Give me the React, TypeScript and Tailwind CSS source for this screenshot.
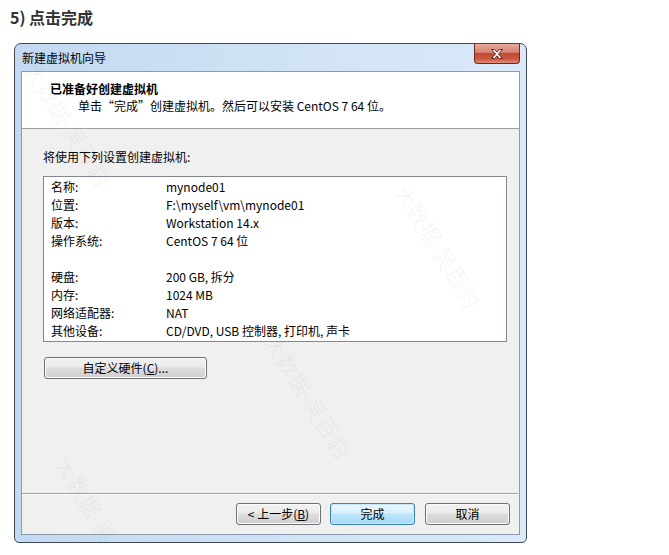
import React from 'react';

const font = "font-['Noto_Sans_CJK_SC','Microsoft_YaHei',sans-serif]";

type Row = { label: string; value: string } | null;

const summary: Row[] = [
  { label: '名称:', value: 'mynode01' },
  { label: '位置:', value: 'F:\\myself\\vm\\mynode01' },
  { label: '版本:', value: 'Workstation 14.x' },
  { label: '操作系统:', value: 'CentOS 7 64 位' },
  null,
  { label: '硬盘:', value: '200 GB, 拆分' },
  { label: '内存:', value: '1024 MB' },
  { label: '网络适配器:', value: 'NAT' },
  { label: '其他设备:', value: 'CD/DVD, USB 控制器, 打印机, 声卡' },
];

// faint diagonal watermark stamps
const marks = [
  { left: 28, top: 58, text: '大数据-吴百豹' },
  { left: 398, top: 180, text: '大数据-吴百豹' },
  { left: 268, top: 330, text: '大数据-吴百豹' },
  { left: 58, top: 452, text: '大数据-吴' },
];

const WinButton: React.FC<{ children: React.ReactNode; primary?: boolean; className?: string }> = ({
  children,
  primary,
  className = '',
}) => (
  <div
    className={`flex items-center justify-center rounded-[3px] border text-[12px] leading-[16px] text-black ${
      primary
        ? 'border-[#3c7fb1] bg-[linear-gradient(#eaf6fd_0%,#d9f0fc_45%,#bee6fd_50%,#a7d9f5_100%)] shadow-[inset_0_0_0_1px_#c8e8fb]'
        : 'border-[#707070] bg-[linear-gradient(#f2f2f2_0%,#ebebeb_45%,#dddddd_50%,#cfcfcf_100%)] shadow-[inset_0_0_0_1px_#fcfcfc]'
    } ${className}`}
  >
    {children}
  </div>
);

const CloseButton: React.FC = () => (
  <div className="absolute right-[6px] top-0 flex h-[20px] w-[46px] items-center justify-center rounded-b-[4px] border border-t-0 border-[#6b2a22] bg-[linear-gradient(#e9a99b_0%,#d7806e_45%,#c4472f_50%,#cb5a43_80%,#e28f79_100%)]">
    <svg width="14" height="12" viewBox="0 0 14 12">
      <path
        d="M1.5 1.5h3l2.5 2.7 2.5-2.7h3l-4 4.5 4 4.5h-3L7 7.8l-2.5 2.7h-3l4-4.5z"
        fill="#ffffff"
        stroke="#5a2a24"
        strokeWidth="1"
        strokeLinejoin="round"
      />
    </svg>
  </div>
);

const App: React.FC = () => {
  return (
    <div className={`relative h-[555px] w-[669px] overflow-hidden bg-white ${font}`}>
      {/* Step heading */}
      <div className="h-[43px] pl-[10px] pt-[5px] text-[16px] font-bold leading-[24px] text-[#333333]">5) 点击完成</div>

      {/* Wizard window */}
      <div className="relative ml-[14px] flex h-[500px] w-[513px] flex-col rounded-t-[7px] rounded-b-[5px] border border-[#3e4a57] bg-[linear-gradient(90deg,#c3d9f1_0%,#d2e4f6_60%,#dbe9f8_100%)]">
        {/* Title bar */}
        <div className="relative flex h-[27px] shrink-0 items-center pl-[7px] text-[12px] leading-[16px] text-black">
          新建虚拟机向导
          <CloseButton />
        </div>

        {/* Client area */}
        <div className="mx-[6px] flex h-[464px] flex-col border border-[#8a9bb0] bg-[#f0f0f0]">
          {/* Header */}
          <div className="h-[57px] shrink-0 border-b border-[#a0a0a0] bg-white pl-[28px] pt-[8px] text-[12px] leading-[17px] text-black">
            <div className="font-bold">已准备好创建虚拟机</div>
            <div className="pl-[28px]">单击“完成”创建虚拟机。然后可以安装 CentOS 7 64 位。</div>
          </div>

          {/* Body */}
          <div className="flex flex-1 flex-col pl-[21px] pt-[20px] text-[12px] leading-[16px] text-black">
            <div>将使用下列设置创建虚拟机:</div>

            <div className="mt-[11px] h-[166px] w-[464px] border border-[#828790] bg-white pl-[7px] pt-[1px]">
              {summary.map((row, i) =>
                row ? (
                  <div key={i} className="flex h-[18px] items-center">
                    <span className="w-[115px] shrink-0">{row.label}</span>
                    <span>{row.value}</span>
                  </div>
                ) : (
                  <div key={i} className="h-[18px]" />
                )
              )}
            </div>

            <WinButton className="ml-[1px] mt-[15px] h-[22px] w-[163px]">
              <span>
                自定义硬件(<span className="underline">C</span>)...
              </span>
            </WinButton>

            <div className="flex-1" />

            {/* Etched separator */}
            <div className="-ml-[21px] mr-[1px] border-t border-b border-t-[#a0a0a0] border-b-white" />

            <div className="flex h-[39px] items-start pt-[8px]">
              <div className="flex-1" />
              <WinButton className="h-[22px] w-[85px]">
                <span>
                  &lt; 上一步(<span className="underline">B</span>)
                </span>
              </WinButton>
              <WinButton primary className="ml-[9px] h-[22px] w-[85px]">
                完成
              </WinButton>
              <WinButton className="ml-[10px] mr-[9px] h-[22px] w-[85px]">取消</WinButton>
            </div>
          </div>
        </div>
      </div>

      {marks.map((m, i) => (
        <span
          key={i}
          style={{ left: m.left, top: m.top }}
          className="pointer-events-none absolute origin-top-left translate-x-[14px] rotate-[58deg] whitespace-nowrap text-[22px] leading-[24px] text-black/[0.05]"
        >
          {m.text}
        </span>
      ))}
    </div>
  );
};

export default App;
